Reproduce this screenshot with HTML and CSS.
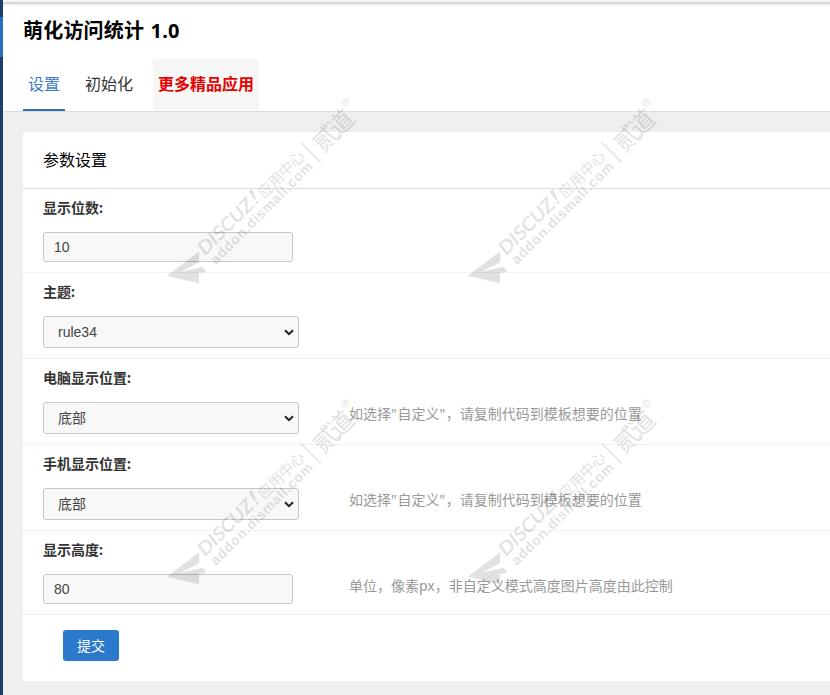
FILE: index.html
```
<!DOCTYPE html>
<html lang="zh-CN">
<head>
<meta charset="utf-8">
<title>萌化访问统计</title>
<link rel="stylesheet" href="styles.css">
</head>
<body>
<div class="app">
  <aside class="side"><div class="side-active"></div></aside>
  <main class="main">
    <header class="head">
      <h1 class="title">萌化访问统计 1.0</h1>
      <nav class="tabs">
        <a class="tab current">设置</a>
        <a class="tab">初始化</a>
        <a class="tab promo">更多精品应用</a>
      </nav>
    </header>
    <form class="card">
      <h2 class="card-title">参数设置</h2>
      <section class="row">
        <label class="label">显示位数:</label>
        <div class="line"><input class="field" type="text" value="10"></div>
      </section>
      <section class="row">
        <label class="label">主题:</label>
        <div class="line"><div class="field select">rule34<svg class="chev" viewBox="0 0 10 7"><path d="M1 1.2 5 5.2 9 1.2"/></svg></div></div>
      </section>
      <section class="row">
        <label class="label">电脑显示位置:</label>
        <div class="line"><div class="field select">底部<svg class="chev" viewBox="0 0 10 7"><path d="M1 1.2 5 5.2 9 1.2"/></svg></div><p class="tip">如选择<span class="quote">"</span>自定义<span class="quote">"</span>，请复制代码到模板想要的位置</p></div>
      </section>
      <section class="row">
        <label class="label">手机显示位置:</label>
        <div class="line"><div class="field select">底部<svg class="chev" viewBox="0 0 10 7"><path d="M1 1.2 5 5.2 9 1.2"/></svg></div><p class="tip">如选择<span class="quote">"</span>自定义<span class="quote">"</span>，请复制代码到模板想要的位置</p></div>
      </section>
      <section class="row">
        <label class="label">显示高度:</label>
        <div class="line"><input class="field" type="text" value="80"><p class="tip">单位，像素px，非自定义模式高度图片高度由此控制</p></div>
      </section>
      <div class="actions"><button class="submit" type="button">提交</button></div>
    </form>
  </main>
</div>
<svg class="watermark" viewBox="0 0 830 695">
  <defs>
    <g id="mark">
      <path d="M16.7 185.7 49.3 161.3 49 172.3 30.7 181.7 52.7 176.7 56.3 181.7 49 183 49 193.3Z"/>
      <g transform="translate(55 166) rotate(-45)">
        <text class="wm-brand" x="0" y="0" textLength="71" lengthAdjust="spacingAndGlyphs">DISCUZ</text>
        <path d="M76.5 -14.5 80.5 -14.5 76.5 -4 74.8 -4ZM73.8 -2.2 76.4 -2.2 75.7 0 73.1 0Z"/>
        <text class="wm-cn" x="82" y="1.5" textLength="59">应用中心</text>
      </g>
      <text class="wm-url" transform="translate(66 175) rotate(-45)" textLength="138">addon.dismall.com</text>
      <path class="wm-bar" d="M150.7 52.5 170.7 72.5"/>
      <text class="wm-name" transform="translate(173 63.5) rotate(-45)" textLength="47">贰道</text>
      <circle class="wm-ring" cx="195.3" cy="12.5" r="3.5"/>
      <text class="wm-r" x="193.5" y="14.4">R</text>
    </g>
  </defs>
  <use href="#mark" x="150" y="90"/>
  <use href="#mark" x="451" y="90"/>
  <use href="#mark" x="150" y="391"/>
  <use href="#mark" x="451" y="391"/>
</svg>
</body>
</html>
```

FILE: styles.css
```
* { box-sizing: border-box; }
body {
  margin: 0;
  width: 830px;
  height: 695px;
  overflow: hidden;
  position: relative;
  background: #efefef;
  color: #333;
  font: 14px/20px "Noto Sans", "Noto Sans CJK SC", sans-serif;
}
h1, h2, p { margin: 0; }
.app { display: grid; grid-template-columns: 3px 1fr; height: 695px; }
.side { background: #1b3e6b; padding-top: 17px; }
.side-active { height: 40px; background: #2b6fc4; }
.main { min-width: 0; }
.head {
  height: 112px;
  padding: 17px 20px 0;
  background: #fff;
  border-bottom: 1px solid #dcdcdc;
  box-shadow: inset 0 2px #f4f4f4, inset 0 4px #d6d6d6, inset 0 5px #ececec, inset 0 6px #f9f9f9;
}
.title { height: 42px; font-size: 20px; line-height: 28px; word-spacing: 1px; letter-spacing: .2px; color: #000; }
.tabs { display: flex; height: 52px; font-size: 16px; line-height: 51px; }
.tab { height: 52px; padding: 0 5px; margin-right: 15px; color: #333; }
.tab.current { color: #3a7bc8; border-bottom: 2px solid #2d71b8; padding: 0 5px; }
.tab.promo { background: #f6f6f6; color: #e60000; font-weight: bold; height: 51px; }
.card { height: 549px; margin: 20px 0 0 20px; background: #fff; border-radius: 2px 0 0 2px; }
.card-title {
  height: 57px;
  padding-left: 20px;
  border-bottom: 1px solid #dcdcdc;
  font-size: 16px;
  font-weight: 400;
  line-height: 57px;
  color: #000;
}
.row { padding: 9px 20px 10px; border-bottom: 1px solid #f2f2f2; }
.label { display: block; height: 34px; font-weight: bold; }
.line { display: flex; align-items: flex-start; }
.field {
  width: 250px;
  height: 30px;
  padding: 0 10px;
  border: 1px solid #c8c8c8;
  border-radius: 3px;
  background: #f8f8f8;
  color: #444;
  font: 14px/28px "Liberation Sans", "Noto Sans CJK SC", sans-serif;
}
.select {
  display: flex;
  align-items: center;
  justify-content: space-between;
  width: 256px;
  height: 32px;
  padding: 0 4px 0 14px;
}
.chev { width: 10px; height: 7px; fill: none; stroke: #222; stroke-width: 2; }
.tip { margin: 2px 0 0 50px; color: #999; }
.quote { letter-spacing: .7px; }
input + .tip { margin-left: 56px; }
.actions { padding: 15px 40px; }
.submit {
  display: block;
  width: 56px;
  height: 31px;
  padding: 0;
  border: 0;
  border-radius: 3px;
  background: #2b79cd;
  color: #fff;
  font: 14px/31px "Noto Sans CJK SC", sans-serif;
}
.watermark {
  position: absolute;
  inset: 0;
  width: 830px;
  height: 695px;
  fill: #000;
  opacity: .115;
  pointer-events: none;
}
.wm-brand { font: italic 500 18.5px Lato, sans-serif; stroke: #000; stroke-width: .3; }
.wm-cn { font: 15px "Noto Sans CJK SC", sans-serif; }
.wm-url { font: bold 14px "Liberation Sans", sans-serif; }
.wm-name { font: 25px "Noto Sans CJK SC", sans-serif; }
.wm-bar { stroke: #000; stroke-width: 1.3; }
.wm-ring { fill: none; stroke: #000; stroke-width: .8; }
.wm-r { font: 5px "Liberation Sans", sans-serif; }
```
